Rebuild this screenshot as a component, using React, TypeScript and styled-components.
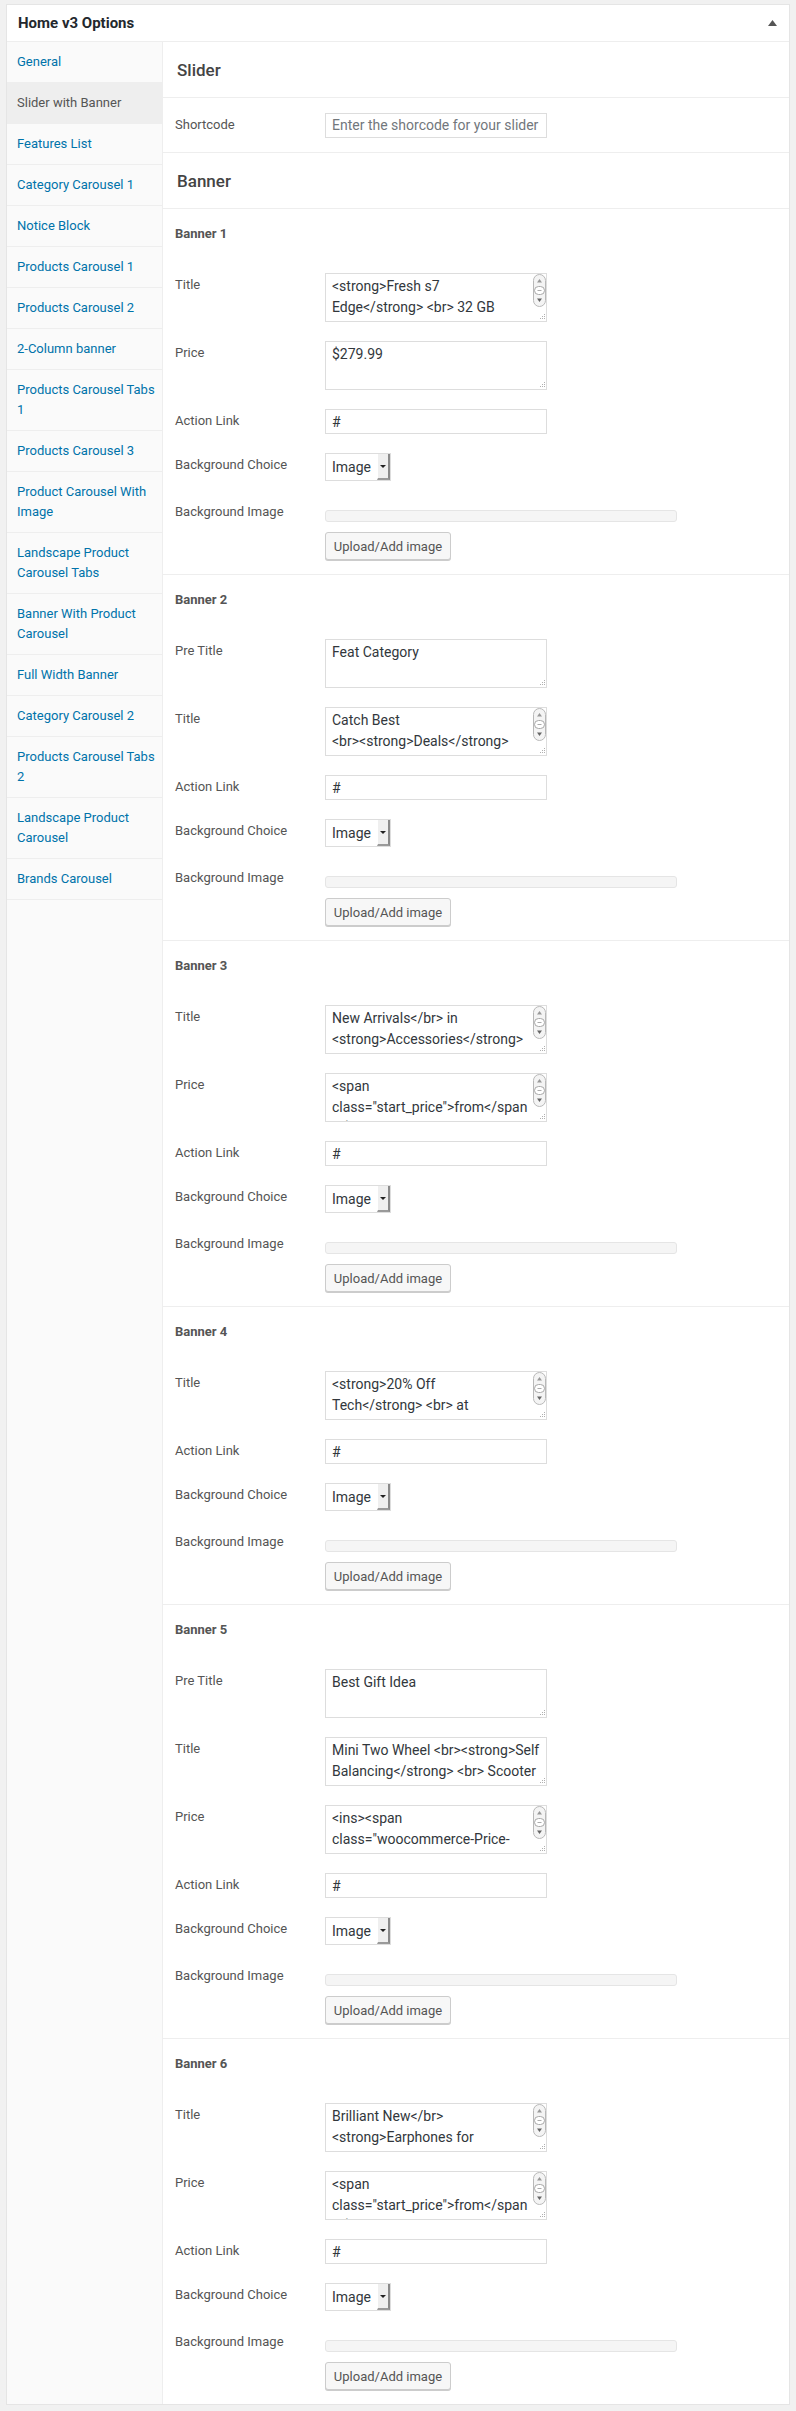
import React from "react";
import styled, { createGlobalStyle } from "styled-components";

const GlobalStyle = createGlobalStyle`
  html, body {
    margin: 0;
    padding: 0;
    background: #f1f1f1;
  }
  body {
    font-family: Roboto, "Liberation Sans", Arial, sans-serif;
    color: #555;
  }
  * {
    box-sizing: border-box;
  }
`;

const Page = styled.div`
  padding: 4px 6px;
`;

const Panel = styled.div`
  background: #fff;
  border: 1px solid #e5e5e5;
`;

const PanelHeader = styled.div`
  height: 36px;
  border-bottom: 1px solid #eee;
  display: flex;
  align-items: center;
  justify-content: space-between;
  padding: 0 12px 0 11px;
  box-sizing: content-box;
`;

const PanelTitle = styled.h2`
  margin: 0;
  font-size: 15px;
  font-weight: 700;
  color: #23282d;
`;

const Body = styled.div`
  display: flex;
`;

const Sidebar = styled.ul`
  width: 156px;
  flex-shrink: 0;
  margin: 0;
  padding: 0;
  list-style: none;
  background: #fafafa;
  border-right: 1px solid #eee;
`;

const NavItem = styled.li<{ $active?: boolean }>`
  padding: 10px 4px 10px 10px;
  font-size: 13px;
  line-height: 20px;
  border-bottom: 1px solid #eee;
  color: ${(p) => (p.$active ? "#555" : "#0073aa")};
  background: ${(p) => (p.$active ? "#eee" : "transparent")};
`;

const Content = styled.div`
  flex: 1;
  min-width: 0;
`;

const GroupHead = styled.h3`
  margin: 0;
  height: 56px;
  display: flex;
  align-items: center;
  padding-left: 14px;
  font-size: 17px;
  font-weight: 500;
  color: #444;
  border-bottom: 1px solid #eee;
`;

const ShortcodeRow = styled.div`
  display: flex;
  align-items: center;
  height: 55px;
  padding-left: 12px;
  border-bottom: 1px solid #eee;
`;

const Section = styled.div<{ $last?: boolean }>`
  padding: 15px 0 14px 12px;
  border-bottom: ${(p) => (p.$last ? "none" : "1px solid #eee")};
`;

const SectionTitle = styled.h4`
  margin: 0 0 29px;
  font-size: 13px;
  line-height: 20px;
  font-weight: 700;
  color: #555;
`;

const Row = styled.div`
  display: flex;
  align-items: flex-start;
  margin-bottom: 19px;
  &:last-child {
    margin-bottom: 0;
  }
`;

const Label = styled.label`
  width: 150px;
  flex-shrink: 0;
  font-size: 13px;
  line-height: 24px;
  color: #555;
`;

const Field = styled.div`
  display: flex;
  flex-direction: column;
  align-items: flex-start;
`;

const TextInput = styled.input`
  width: 222px;
  height: 25px;
  margin: 0;
  padding: 0 6px;
  border: 1px solid #ddd;
  font-family: inherit;
  font-size: 14px;
  color: #32373c;
  background: #fff;
  outline: none;
  &::placeholder {
    color: #72777c;
  }
`;

const AreaWrap = styled.div`
  position: relative;
  width: 222px;
  height: 49px;
`;

const TextArea = styled.textarea<{ $scroll?: boolean }>`
  display: block;
  width: 100%;
  height: 100%;
  margin: 0;
  padding: 2px ${(p) => (p.$scroll ? "16px" : "6px")} 2px 6px;
  border: 1px solid #ddd;
  font-family: inherit;
  font-size: 14px;
  line-height: 21px;
  color: #32373c;
  background: #fff;
  resize: none;
  overflow: hidden;
  outline: none;
`;

const ScrollArt = styled.svg`
  position: absolute;
  top: 1px;
  right: 1px;
`;

const GripArt = styled.svg`
  position: absolute;
  right: 2px;
  bottom: 2px;
`;

const SelectBox = styled.div`
  width: 66px;
  height: 28px;
  display: flex;
  align-items: stretch;
  justify-content: space-between;
  border: 1px solid #ddd;
  background: #fff;
  font-size: 14px;
  color: #32373c;
`;

const SelectText = styled.span`
  display: flex;
  align-items: center;
  padding-left: 6px;
`;

const SelectButton = styled.span`
  width: 13px;
  display: flex;
  align-items: center;
  justify-content: center;
  background: #efefef;
  border-left: 1px solid #fff;
  border-right: 2px solid #8a8a8a;
  border-bottom: 2px solid #9a9a9a;
  &::after {
    content: "";
    border-left: 3px solid transparent;
    border-right: 3px solid transparent;
    border-top: 3px solid #222;
  }
`;

const MediaBar = styled.div`
  width: 352px;
  height: 12px;
  margin-top: 10px;
  border: 1px solid #e5e5e5;
  border-radius: 3px;
  background: #f5f5f5;
`;

const UploadButton = styled.button`
  margin-top: 10px;
  width: 126px;
  height: 28px;
  padding: 0;
  border: 1px solid #ccc;
  border-radius: 3px;
  background: #f7f7f7;
  box-shadow: 0 1px 0 #ccc;
  font-family: inherit;
  font-size: 13px;
  color: #555;
`;

const navItems = [
  "General",
  "Slider with Banner",
  "Features List",
  "Category Carousel 1",
  "Notice Block",
  "Products Carousel 1",
  "Products Carousel 2",
  "2-Column banner",
  "Products Carousel Tabs 1",
  "Products Carousel 3",
  "Product Carousel With Image",
  "Landscape Product Carousel Tabs",
  "Banner With Product Carousel",
  "Full Width Banner",
  "Category Carousel 2",
  "Products Carousel Tabs 2",
  "Landscape Product Carousel",
  "Brands Carousel",
];

// word joiner keeps "<br><strong>" together the way the reference wraps it
const WJ = "\u2060";

type AreaField = { label: string; value: string; scroll?: boolean };

const banners: AreaField[][] = [
  [
    { label: "Title", value: "<strong>Fresh s7 Edge</strong> <br> 32 GB\n</strong>", scroll: true },
    { label: "Price", value: "$279.99" },
  ],
  [
    { label: "Pre Title", value: "Feat Category" },
    { label: "Title", value: `Catch Best <br>${WJ}<strong>Deals</strong>\n`, scroll: true },
  ],
  [
    { label: "Title", value: "New Arrivals</br> in <strong>Accessories</strong>\n", scroll: true },
    { label: "Price", value: '<span class="start_price">from</span\n> $99.00', scroll: true },
  ],
  [{ label: "Title", value: "<strong>20% Off\nTech</strong> <br> at\nBest Buy", scroll: true }],
  [
    { label: "Pre Title", value: "Best Gift Idea" },
    { label: "Title", value: `Mini Two Wheel <br>${WJ}<strong>Self Balancing</strong> <br> Scooter` },
    {
      label: "Price",
      value: '<ins><span class="woocommerce-Price-amount amount">',
      scroll: true,
    },
  ],
  [
    { label: "Title", value: "Brilliant New</br> <strong>Earphones for\nTablet</strong>", scroll: true },
    { label: "Price", value: '<span class="start_price">from</span\n> $49.00', scroll: true },
  ],
];

const ScrollBar = () => (
  <ScrollArt width="13" height="33" viewBox="0 0 13 33">
    <rect x="0.5" y="0.5" width="12" height="32" rx="6" fill="#f4f4f4" stroke="#b8b8b8" />
    <polygon points="6.5,5 4,8.5 9,8.5" fill="#999" />
    <rect x="1.5" y="12.5" width="10" height="8" rx="4" fill="#fff" stroke="#a8a8a8" />
    <line x1="4.5" y1="16.5" x2="8.5" y2="16.5" stroke="#aaa" />
    <polygon points="4,24.5 9,24.5 6.5,28" fill="#666" />
  </ScrollArt>
);

const Grip = () => (
  <GripArt width="6" height="6" viewBox="0 0 6 6">
    <g fill="#b0b0b0">
      <rect x="5" y="0" width="1" height="1" />
      <rect x="3" y="2" width="1" height="1" />
      <rect x="5" y="2" width="1" height="1" />
      <rect x="1" y="4" width="1" height="1" />
      <rect x="3" y="4" width="1" height="1" />
      <rect x="5" y="4" width="1" height="1" />
    </g>
  </GripArt>
);

const Area = ({ value, scroll }: { value: string; scroll?: boolean }) => (
  <AreaWrap>
    <TextArea $scroll={scroll} defaultValue={value} readOnly />
    {scroll && <ScrollBar />}
    <Grip />
  </AreaWrap>
);

const BannerSection = ({ index, fields, last }: { index: number; fields: AreaField[]; last: boolean }) => (
  <Section $last={last}>
    <SectionTitle>Banner {index}</SectionTitle>
    {fields.map((f, i) => (
      <Row key={i}>
        <Label>{f.label}</Label>
        <Field>
          <Area value={f.value} scroll={f.scroll} />
        </Field>
      </Row>
    ))}
    <Row>
      <Label>Action Link</Label>
      <Field>
        <TextInput defaultValue="#" readOnly />
      </Field>
    </Row>
    <Row>
      <Label>Background Choice</Label>
      <Field>
        <SelectBox>
          <SelectText>Image</SelectText>
          <SelectButton />
        </SelectBox>
      </Field>
    </Row>
    <Row>
      <Label>Background Image</Label>
      <Field>
        <MediaBar />
        <UploadButton type="button">Upload/Add image</UploadButton>
      </Field>
    </Row>
  </Section>
);

export default function App() {
  return (
    <>
      <GlobalStyle />
      <Page>
        <Panel>
          <PanelHeader>
            <PanelTitle>Home v3 Options</PanelTitle>
            <svg width="9" height="6" viewBox="0 0 9 6">
              <polygon points="4.5,0 9,6 0,6" fill="#555" />
            </svg>
          </PanelHeader>
          <Body>
            <Sidebar>
              {navItems.map((item) => (
                <NavItem key={item} $active={item === "Slider with Banner"}>
                  {item}
                </NavItem>
              ))}
            </Sidebar>
            <Content>
              <GroupHead>Slider</GroupHead>
              <ShortcodeRow>
                <Label>Shortcode</Label>
                <TextInput placeholder="Enter the shorcode for your slider here" readOnly />
              </ShortcodeRow>
              <GroupHead>Banner</GroupHead>
              {banners.map((fields, i) => (
                <BannerSection key={i} index={i + 1} fields={fields} last={i === banners.length - 1} />
              ))}
            </Content>
          </Body>
        </Panel>
      </Page>
    </>
  );
}
